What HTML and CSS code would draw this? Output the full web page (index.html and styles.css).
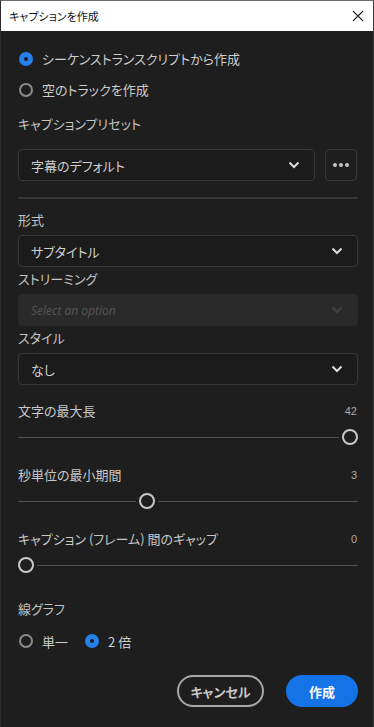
FILE: index.html
```html
<!DOCTYPE html>
<html>
<head>
	<meta charset="UTF-8">
	<title>キャプションを作成</title>
	<link rel="stylesheet" href="styles.css">
</head>
<body>

<div class="window">
	<div class="titlebar">
		<span class="title">キャプションを作成</span>
		<svg class="close" width="12" height="12" viewBox="0 0 12 12"><path d="M1 1L11 11M11 1L1 11" stroke="#222" stroke-width="1.1" fill="none"/></svg>
	</div>

	<div class="content">
		<div class="radio-row"><span class="radio on"></span>シーケンストランスクリプトから作成</div>
		<div class="radio-row"><span class="radio"></span>空のトラックを作成</div>

		<div class="label preset-label">キャプションプリセット</div>
		<div class="preset-row">
			<div class="select">
				<span>字幕のデフォルト</span>
				<svg class="chev" width="12" height="8" viewBox="0 0 12 8"><path d="M1.5 1.5L6 6L10.5 1.5" stroke="#ddd" stroke-width="2" fill="none"/></svg>
			</div>
			<div class="more"><i></i><i></i><i></i></div>
		</div>

		<div class="sep"></div>

		<div class="label lab-format">形式</div>
		<div class="select field">
			<span>サブタイトル</span>
			<svg class="chev" width="12" height="8" viewBox="0 0 12 8"><path d="M1.5 1.5L6 6L10.5 1.5" stroke="#ddd" stroke-width="2" fill="none"/></svg>
		</div>

		<div class="label lab-tight">ストリーミング</div>
		<div class="select field disabled">
			<span class="placeholder">Select an option</span>
			<svg class="chev" width="12" height="8" viewBox="0 0 12 8"><path d="M1.5 1.5L6 6L10.5 1.5" stroke="#444" stroke-width="2" fill="none"/></svg>
		</div>

		<div class="label lab-tight">スタイル</div>
		<div class="select field">
			<span>なし</span>
			<svg class="chev" width="12" height="8" viewBox="0 0 12 8"><path d="M1.5 1.5L6 6L10.5 1.5" stroke="#ddd" stroke-width="2" fill="none"/></svg>
		</div>

		<div class="slider-group first">
			<div class="slider-head"><span>文字の最大長</span><span class="value">42</span></div>
			<div class="slider"><div class="track"></div><div class="thumb" style="--pos: 1"></div></div>
		</div>
		<div class="slider-group">
			<div class="slider-head"><span>秒単位の最小期間</span><span class="value">3</span></div>
			<div class="slider"><div class="track"></div><div class="thumb" style="--pos: 0.373"></div></div>
		</div>
		<div class="slider-group">
			<div class="slider-head"><span>キャプション (フレーム) 間のギャップ</span><span class="value">0</span></div>
			<div class="slider"><div class="track"></div><div class="thumb" style="--pos: 0"></div></div>
		</div>

		<div class="label lab-graph">線グラフ</div>
		<div class="inline-radios">
			<div class="radio-row"><span class="radio"></span>単一</div>
			<div class="radio-row"><span class="radio on"></span>2 倍</div>
		</div>

		<div class="buttons">
			<div class="button secondary">キャンセル</div>
			<div class="button primary">作成</div>
		</div>
	</div>
</div>

</body>
</html>
```

FILE: styles.css
```css
html, body{
	margin: 0;
	padding: 0;
	background-color: #1e1e1e;
}
body{
	font-family: "Noto Sans CJK JP", "Noto Sans", sans-serif;
	font-feature-settings: "palt";
	font-size: 13px;
	color: #c8c8c8;
}

.window{
	width: 374px;
	height: 727px;
	box-sizing: border-box;
	border-top: 1px solid #6e6e6e;
	border-left: 1px solid #2c2c2c;
	border-right: 1px solid #3a3a3a;
	background-color: #1e1e1e;
	overflow: hidden;
}

.titlebar{
	height: 30px;
	background-color: #fff;
	display: flex;
	align-items: center;
	justify-content: space-between;
	padding: 0 8px 0 8px;
}
.title{
	font-size: 11px;
	color: #111;
}
.close{
	margin-right: 1px;
}

.content{
	padding: 12px 16px 0 17px;
}

/* radios */
.radio-row{
	height: 31px;
	display: flex;
	align-items: center;
	color: #cdcdcd;
}
.radio{
	width: 14px;
	height: 14px;
	box-sizing: border-box;
	border-radius: 50%;
	border: 2px solid #8c8c8c;
	margin: 0 9px 0 1px;
	display: flex;
	align-items: center;
	justify-content: center;
}
.radio.on{
	border: none;
	background-color: #2680eb;
}
.radio.on::after{
	content: "";
	width: 4px;
	height: 4px;
	border-radius: 50%;
	background-color: #1e1e1e;
}
.inline-radios{
	display: flex;
	gap: 16px;
	margin-top: 7px;
	height: 30px;
}
.inline-radios .radio-row{
	height: 30px;
}

/* labels */
.label{
	line-height: 20px;
	color: #c4c4c4;
}
.preset-label{
	margin-top: 9px;
}
.lab-format{
	margin-top: 11px;
}
.lab-tight{
	margin-top: 2px;
}
.lab-graph{
	margin-top: 24px;
}

/* selects */
.preset-row{
	display: flex;
	gap: 10px;
	margin-top: 15px;
}
.select{
	flex: 1;
	height: 32px;
	box-sizing: border-box;
	border: 1px solid #373737;
	border-radius: 4px;
	background-color: #1b1b1b;
	display: flex;
	align-items: center;
	justify-content: space-between;
	padding: 0 14px 0 12px;
	color: #d0d0d0;
}
.select.field{
	margin-top: 5px;
	width: 340px;
}
.select.disabled{
	background-color: #2a2a2a;
	border-color: #2a2a2a;
}
.placeholder{
	font-family: "Open Sans", "Liberation Sans", sans-serif;
	font-style: italic;
	font-size: 12px;
	color: #555;
}
.more{
	width: 32px;
	height: 32px;
	box-sizing: border-box;
	border: 1px solid #373737;
	border-radius: 4px;
	display: flex;
	align-items: center;
	justify-content: center;
	gap: 2px;
}
.more i{
	width: 4px;
	height: 4px;
	border-radius: 50%;
	background-color: #c8c8c8;
}

.sep{
	height: 2px;
	background-color: #363636;
	margin-top: 16px;
	width: 340px;
}

/* sliders */
.slider-group{
	margin-top: 18px;
	width: 340px;
}
.slider-group.first{
	margin-top: 16px;
}
.slider-head{
	display: flex;
	justify-content: space-between;
	line-height: 20px;
}
.value{
	font-family: "Liberation Sans", sans-serif;
	font-size: 11px;
	color: #aaa;
	padding-right: 1px;
}
.slider{
	position: relative;
	height: 20px;
	margin-top: 6px;
}
.track{
	position: absolute;
	left: 0;
	right: 0;
	top: 10px;
	height: 1px;
	background-color: #4e4e4e;
}
.thumb{
	position: absolute;
	top: 2px;
	left: calc(var(--pos) * 324px);
	width: 16px;
	height: 16px;
	box-sizing: border-box;
	border-radius: 50%;
	border: 2px solid #c8c8c8;
	background-color: #1e1e1e;
	box-shadow: 0 0 0 3px #1e1e1e;
}

/* buttons */
.buttons{
	display: flex;
	justify-content: flex-end;
	gap: 22px;
	margin-top: 19px;
	width: 340px;
}
.button{
	height: 32px;
	box-sizing: border-box;
	border-radius: 16px;
	display: flex;
	align-items: center;
	justify-content: center;
	font-weight: bold;
	font-size: 13px;
}
.button.secondary{
	width: 87px;
	border: 2px solid #a8a8a8;
	color: #c8c8c8;
}
.button.primary{
	width: 72px;
	background-color: #1473e6;
	color: #fff;
}
```
